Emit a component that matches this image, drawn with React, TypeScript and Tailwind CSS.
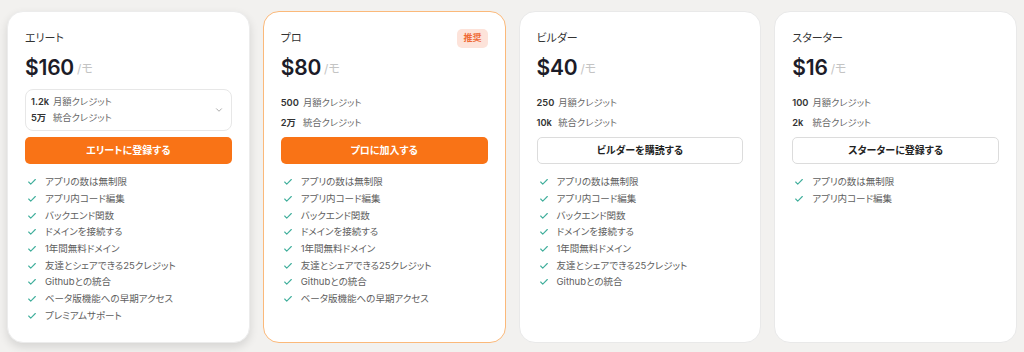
import React from "react";

type Card = {
  title: string;
  price: string;
  badge?: string;
  credits: [string, string][];
  boxed?: boolean;
  button: string;
  primary?: boolean;
  features: string[];
  variant: "shadow" | "orange" | "plain";
};

const ALL = [
  "アプリの数は無制限",
  "アプリ内コード編集",
  "バックエンド関数",
  "ドメインを接続する",
  "1年間無料ドメイン",
  "友達とシェアできる25クレジット",
  "Githubとの統合",
  "ベータ版機能への早期アクセス",
  "プレミアムサポート",
];

const cards: Card[] = [
  {
    title: "エリート",
    price: "$160",
    credits: [
      ["1.2k", "月額クレジット"],
      ["5万", "統合クレジット"],
    ],
    boxed: true,
    button: "エリートに登録する",
    primary: true,
    features: ALL,
    variant: "shadow",
  },
  {
    title: "プロ",
    price: "$80",
    badge: "推奨",
    credits: [
      ["500", "月額クレジット"],
      ["2万", "統合クレジット"],
    ],
    button: "プロに加入する",
    primary: true,
    features: ALL.slice(0, 8),
    variant: "orange",
  },
  {
    title: "ビルダー",
    price: "$40",
    credits: [
      ["250", "月額クレジット"],
      ["10k", "統合クレジット"],
    ],
    button: "ビルダーを購読する",
    features: ALL.slice(0, 7),
    variant: "plain",
  },
  {
    title: "スターター",
    price: "$16",
    credits: [
      ["100", "月額クレジット"],
      ["2k", "統合クレジット"],
    ],
    button: "スターターに登録する",
    features: ALL.slice(0, 2),
    variant: "plain",
  },
];

function CheckIcon() {
  return (
    <svg width="10" height="10" viewBox="0 0 24 24" fill="none" stroke="#3fae9b" strokeWidth="2.6" strokeLinecap="round" strokeLinejoin="round" className="shrink-0">
      <path d="M20 6 9 17l-5-5" />
    </svg>
  );
}

function Chevron() {
  return (
    <svg width="10" height="10" viewBox="0 0 24 24" fill="none" stroke="#9a9a9a" strokeWidth="2" strokeLinecap="round" strokeLinejoin="round">
      <path d="m6 9 6 6 6-6" />
    </svg>
  );
}

function PlanCard({ c }: { c: Card }) {
  const border =
    c.variant === "orange"
      ? "border-[#fbb97a]"
      : c.variant === "shadow"
      ? "border-[#ececec] shadow-[0_4px_10px_rgba(0,0,0,0.12)]"
      : "border-[#e9e9e9]";
  return (
    <div className={`flex-1 h-[332px] bg-white rounded-[16px] border ${border} px-[17px] pt-[16px] flex flex-col`}>
      <div className="h-[20px] flex items-center justify-between">
        <span className="text-[11px] text-[#333]">{c.title}</span>
        {c.badge && (
          <span className="h-[19px] px-[6px] rounded-[5px] bg-[#fde3da] text-[#ef6a35] text-[9px] font-semibold flex items-center">
            {c.badge}
          </span>
        )}
      </div>
      <div className="mt-[4px] h-[32px] flex items-center gap-[3px]">
        <span className="text-[21px] font-semibold text-[#1c1c28] tracking-[-0.2px]">{c.price}</span>
        <span className="text-[12px] text-[#c4c4c4] mt-[2px]">/モ</span>
      </div>
      {c.boxed ? (
        <div className="mt-[5px] h-[42px] rounded-[8px] border border-[#e7e7e7] px-[5px] flex items-center justify-between">
          <div className="grid grid-cols-[auto_1fr] gap-x-[4px] leading-[16px] text-[9.3px]">
            {c.credits.map(([n, l]) => (
              <React.Fragment key={l}>
                <span className="font-semibold text-[#333]">{n}</span>
                <span className="text-[#666]">{l}</span>
              </React.Fragment>
            ))}
          </div>
          <div className="pr-[2px]">
            <Chevron />
          </div>
        </div>
      ) : (
        <div className="mt-[5px] h-[42px] pt-[4px] grid grid-cols-[auto_1fr] content-start gap-x-[4px] leading-[20px] text-[9.3px]">
          {c.credits.map(([n, l]) => (
            <React.Fragment key={l}>
              <span className="font-semibold text-[#333]">{n}</span>
              <span className="text-[#666]">{l}</span>
            </React.Fragment>
          ))}
        </div>
      )}
      <button
        className={`mt-[6px] h-[27px] w-full rounded-[5px] text-[10px] font-bold flex items-center justify-center ${
          c.primary ? "bg-[#f97316] text-white" : "bg-white border border-[#dcdcdc] text-[#222]"
        }`}
      >
        {c.button}
      </button>
      <ul className="mt-[10px] flex flex-col">
        {c.features.map((f) => (
          <li key={f} className="h-[16.7px] flex items-center gap-[8px] pl-[2px] text-[9.5px] text-[#5e5e5e]">
            <CheckIcon />
            <span>{f}</span>
          </li>
        ))}
      </ul>
    </div>
  );
}

export default function App() {
  return (
    <div
      className="w-[1024px] h-[352px] bg-[#f2f1ef] px-[7px] pt-[11px] flex gap-[13px] [font-feature-settings:'palt']"
      style={{ fontFamily: '"Inter", "Noto Sans CJK JP", sans-serif' }}
    >
      {cards.map((c) => (
        <PlanCard key={c.title} c={c} />
      ))}
    </div>
  );
}
